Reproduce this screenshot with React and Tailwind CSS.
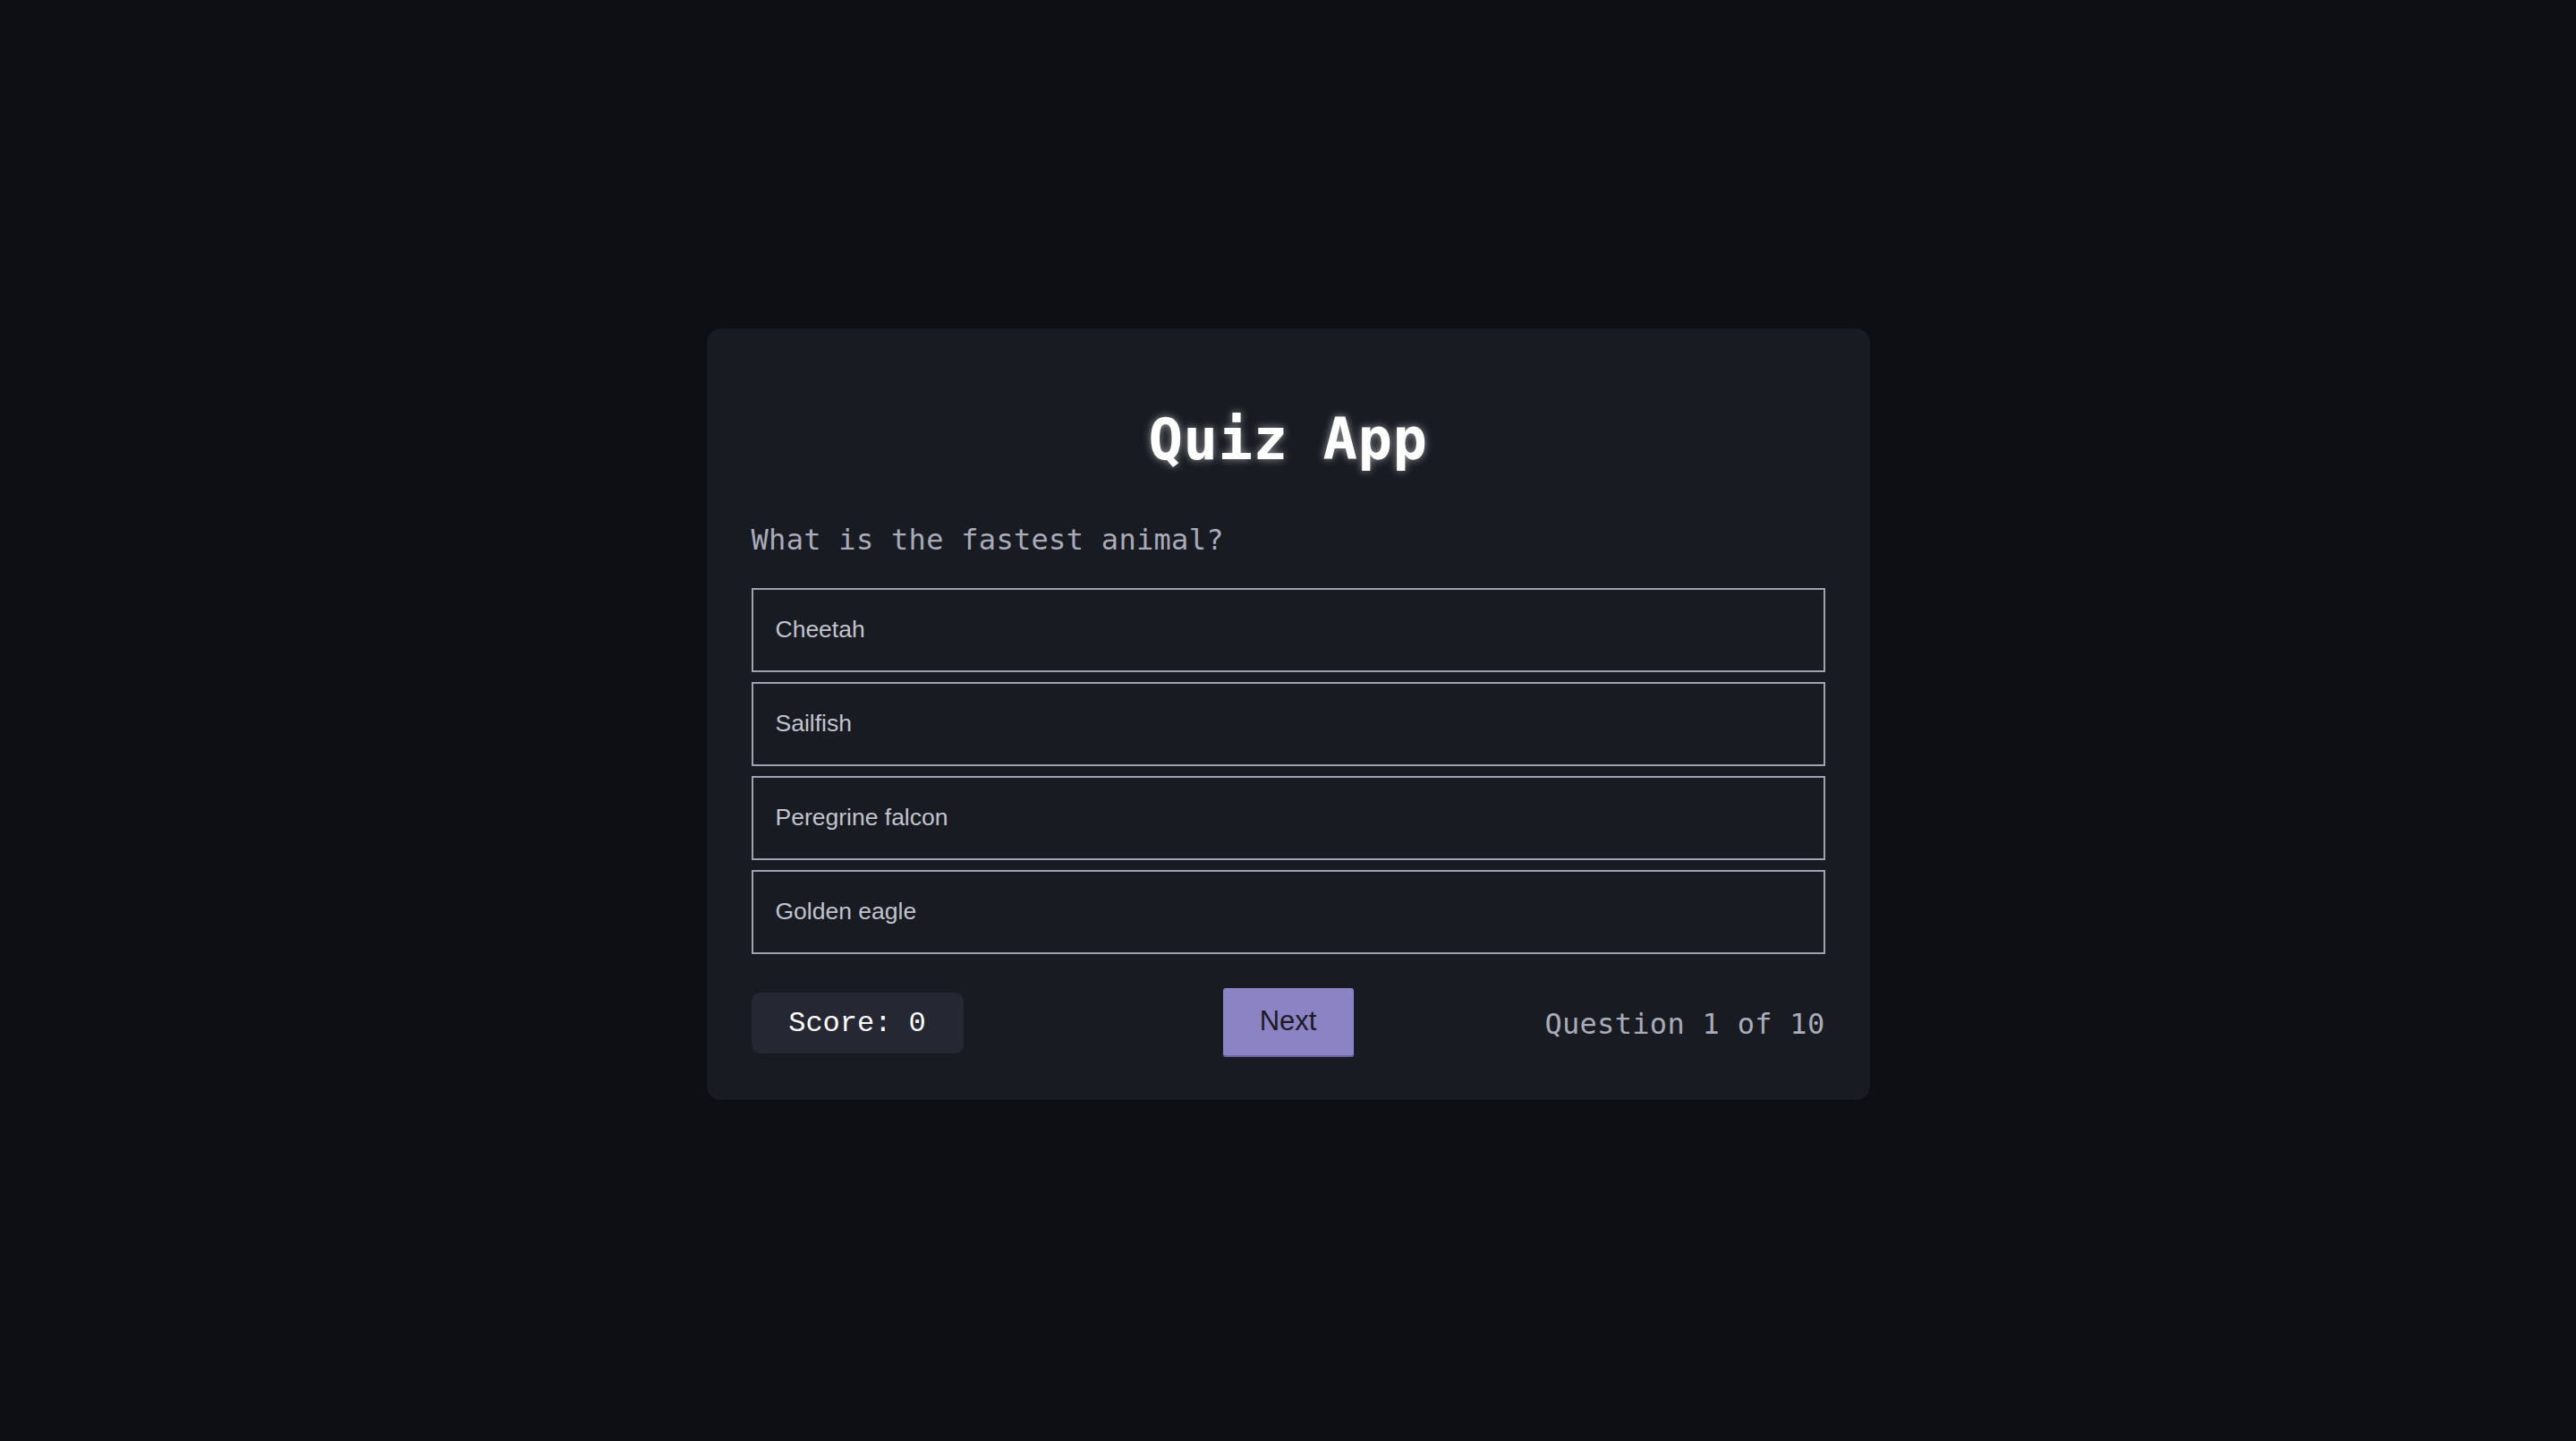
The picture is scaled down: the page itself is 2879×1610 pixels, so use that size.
import { useState } from "react";

const questions = [
  {
    question: "What is the fastest animal?",
    options: ["Cheetah", "Sailfish", "Peregrine falcon", "Golden eagle"],
  },
];

export default function App() {
  const [current] = useState(0);
  const [score] = useState(0);
  const q = questions[current];

  return (
    <div className="min-h-screen bg-[#0d0f14] flex items-center justify-center pb-[14px]">
      {/* Card */}
      <div className="w-[1300px] bg-[#181b22] rounded-[16px] px-[50px] pt-[92px] pb-[48px]">
        <h1 className="text-center text-white font-bold text-[64px] leading-[64px] tracking-[0.5px] font-['DejaVu_Sans_Mono',monospace] [text-shadow:0_0_10px_rgba(255,255,255,0.55)]">
          Quiz App
        </h1>

        <p className="mt-[64px] text-[32px] leading-[32px] tracking-[0.3px] text-[#a9abb9] font-['DejaVu_Sans_Mono',monospace]">
          {q.question}
        </p>

        {/* Options */}
        <div className="mt-[38px] flex flex-col gap-[11px]">
          {q.options.map((opt) => (
            <button
              key={opt}
              className="h-[94px] w-full flex items-center border-2 border-[#9fa2b0] bg-[#181b22] pl-[25px] text-left text-[26.5px] text-[#c1c3cd] font-['Liberation_Sans',Arial,sans-serif]"
            >
              {opt}
            </button>
          ))}
        </div>

        {/* Footer */}
        <div className="mt-[38px] grid grid-cols-3 items-center">
          <div className="justify-self-start h-[68px] w-[237px] flex items-center justify-center pt-[2px] rounded-[10px] bg-[#252733] text-white text-[32px] font-['Liberation_Mono',monospace]">
            Score: {score}
          </div>
          <button className="justify-self-center h-[77px] w-[146px] flex items-center justify-center rounded-[3px] bg-[#8b83c3] border-b-2 border-[#6e64a3] text-[31px] text-[#1c1a26] font-['Liberation_Sans',Arial,sans-serif]">
            Next
          </button>
          <div className="justify-self-end pt-[2px] text-[32px] leading-[32px] tracking-[0.3px] text-[#a9abb9] font-['DejaVu_Sans_Mono',monospace]">
            Question {current + 1} of 10
          </div>
        </div>
      </div>
    </div>
  );
}
